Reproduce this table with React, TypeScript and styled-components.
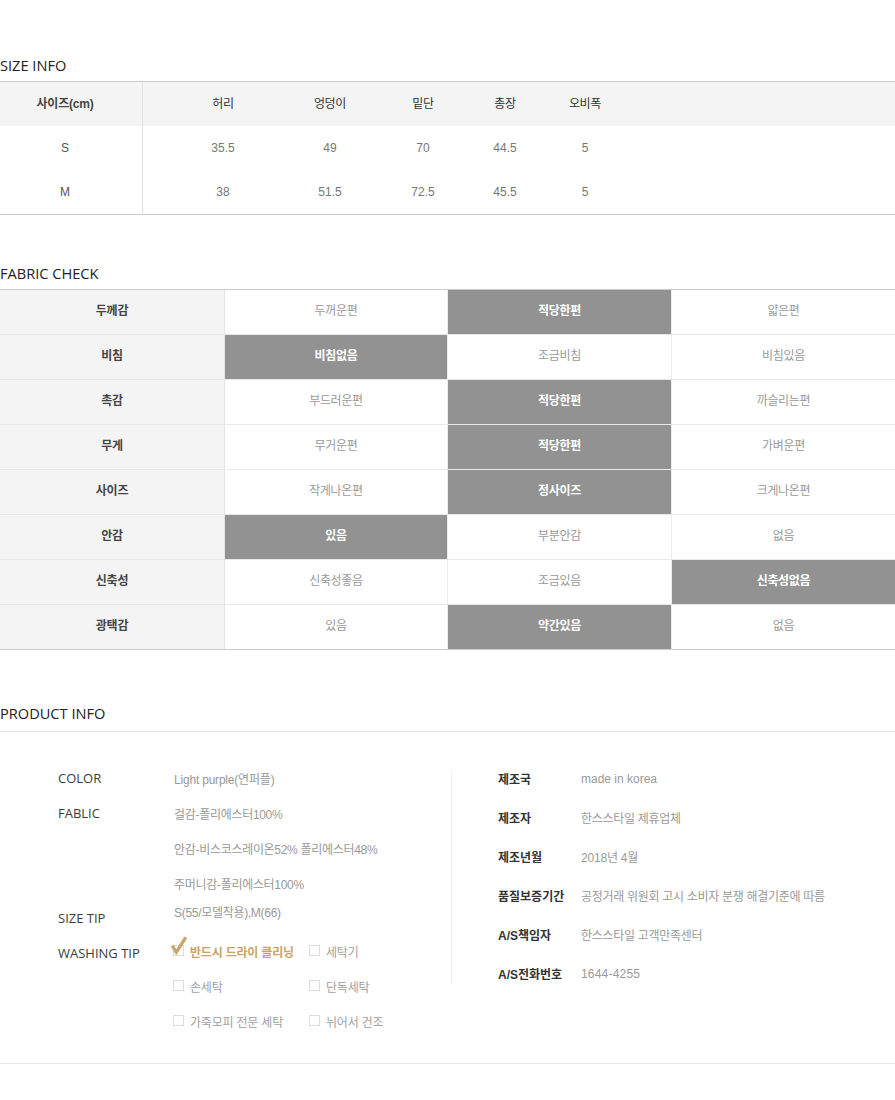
import React from 'react';
import styled, { createGlobalStyle } from 'styled-components';

const KO = `"Liberation Sans", "Noto Sans CJK KR", sans-serif`;
const EN = `"Open Sans", "Noto Sans CJK KR", sans-serif`;

const GlobalStyle = createGlobalStyle`
  html, body { margin: 0; padding: 0; background: #fff; }
  body { font-family: ${KO}; -webkit-font-smoothing: antialiased; }
  * { box-sizing: border-box; }
`;

const Page = styled.div`
  width: 895px;
  padding-top: 56px;
  padding-bottom: 36px;
`;

const SectionTitle = styled.h2<{ $gap?: number }>`
  margin: ${(p) => p.$gap ?? 0}px 0 7px;
  font-family: ${EN};
  font-size: 14.6px;
  font-weight: 400;
  line-height: 18px;
  color: #222;
`;

/* ---------- SIZE INFO ---------- */
const SizeTable = styled.div`
  border-top: 1px solid #cbcbcb;
  border-bottom: 1px solid #cbcbcb;
`;

const SizeRow = styled.div<{ $head?: boolean }>`
  display: grid;
  grid-template-columns: 143px 160px 54px 132px 32px 128px 1fr;
  height: 44px;
  align-items: center;
  background: ${(p) => (p.$head ? '#f4f4f4' : '#fff')};
  padding-bottom: ${(p) => (p.$head ? 4 : 0)}px;
`;

const SizeLabel = styled.div<{ $head?: boolean }>`
  align-self: stretch;
  display: flex;
  align-items: center;
  justify-content: center;
  padding-right: 12px;
  margin-bottom: ${(p) => (p.$head ? -4 : 0)}px;
  padding-bottom: ${(p) => (p.$head ? 4 : 0)}px;
  border-right: 1px solid #e3e3e3;
  font-size: 12px;
  letter-spacing: ${(p) => (p.$head ? '-0.2px' : '0')};
  font-weight: ${(p) => (p.$head ? 700 : 400)};
  color: ${(p) => (p.$head ? '#444' : '#555')};
`;

const SizeCell = styled.div<{ $head?: boolean }>`
  text-align: center;
  white-space: nowrap;
  font-size: 12px;
  letter-spacing: ${(p) => (p.$head ? '-0.3px' : '0')};
  color: ${(p) => (p.$head ? '#333' : '#777')};
`;

/* ---------- FABRIC CHECK ---------- */
const FabricTable = styled.div`
  border-top: 1px solid #cbcbcb;
  border-bottom: 1px solid #cbcbcb;
`;

const FabricRow = styled.div`
  display: grid;
  grid-template-columns: 225px 223px 224px 1fr;
  height: 44px;
  & + & {
    height: 45px;
    border-top: 1px solid #e8e8e8;
  }
`;

const FabricLabel = styled.div`
  display: flex;
  align-items: center;
  justify-content: center;
  padding-bottom: 5px;
  background: #f4f4f4;
  border-right: 1px solid #e4e4e4;
  font-size: 12px;
  font-weight: 700;
  letter-spacing: -0.2px;
  color: #444;
`;

const FabricOption = styled.div<{ $on: boolean }>`
  display: flex;
  align-items: center;
  justify-content: center;
  padding-bottom: 5px;
  font-size: 12px;
  letter-spacing: -0.3px;
  background: ${(p) => (p.$on ? '#929292' : '#fff')};
  color: ${(p) => (p.$on ? '#fff' : '#999')};
  font-weight: ${(p) => (p.$on ? 700 : 400)};
  &:not(:last-child) {
    border-right: 1px solid #ececec;
  }
`;

/* ---------- PRODUCT INFO ---------- */
const ProductBox = styled.div`
  display: flex;
  align-items: flex-start;
  border-top: 1px solid #e5e5e5;
  border-bottom: 1px solid #e5e5e5;
  margin-top: 9px;
  padding: 29px 0 25px;
`;

const LeftInfo = styled.div`
  width: 451px;
  padding-left: 58px;
  display: grid;
  grid-template-columns: 116px 1fr;
`;

const InfoLabel = styled.div<{ $height?: number; $center?: number }>`
  font-family: ${EN};
  font-size: 13px;
  color: #3c3c3c;
  height: ${(p) => p.$height ?? 35}px;
  line-height: ${(p) => (p.$center ?? 17.5) * 2}px;
`;

const ValueStack = styled.div`
  display: flex;
  flex-direction: column;
`;

const InfoValue = styled.div<{ $ls?: number; $height?: number; $line?: number; $shift?: number }>`
  font-size: 12px;
  letter-spacing: ${(p) => p.$ls ?? -0.3}px;
  color: #999;
  white-space: nowrap;
  height: ${(p) => p.$height ?? 35}px;
  line-height: ${(p) => p.$line ?? 35}px;
  padding-top: ${(p) => p.$shift ?? 2}px;
`;

const Options = styled.div`
  display: grid;
  grid-template-columns: 136px 136px;
  grid-auto-rows: 35px;
  margin-left: -1px;
`;

const Option = styled.div<{ $on?: boolean }>`
  display: flex;
  align-items: center;
  gap: 6px;
  font-size: 12px;
  letter-spacing: -0.2px;
  white-space: nowrap;
  color: ${(p) => (p.$on ? '#c8a269' : '#a0a0a0')};
  font-weight: ${(p) => (p.$on ? 700 : 400)};
  padding-top: 1px;
`;

const BoxSvg = styled.svg`
  flex: none;
  overflow: visible;
  margin-top: -1px;
`;

const Divider = styled.div`
  flex: none;
  width: 1px;
  height: 213px;
  margin-top: 10px;
  background: #eeeeee;
`;

const RightInfo = styled.div`
  padding-left: 46px;
  margin-top: -2px;
  display: grid;
  grid-template-columns: 83px 1fr;
  grid-auto-rows: 39px;
  align-items: center;
`;

const RightLabel = styled.div`
  font-size: 12px;
  font-weight: 700;
  letter-spacing: 0;
  color: #333;
  white-space: nowrap;
`;

const RightValue = styled.div<{ $ls?: number }>`
  font-size: 12px;
  letter-spacing: ${(p) => p.$ls ?? -0.3}px;
  color: #999;
  white-space: nowrap;
`;

const CheckBox: React.FC<{ on?: boolean }> = ({ on }) => (
  <BoxSvg width="11" height="11" viewBox="0 0 11 11">
    <rect x="0.5" y="0.5" width="10" height="10" fill="#fff" stroke="#dcdcdc" />
    {on && (
      <path
        d="M-0.8 0.6 L3.3 7.2 L12.8 -7.6"
        fill="none"
        stroke="#c9a46b"
        strokeWidth="3.2"
        strokeLinejoin="miter"
      />
    )}
  </BoxSvg>
);

const sizeHead = ['허리', '엉덩이', '밑단', '총장', '오비폭'];
const sizeRows: { size: string; values: string[] }[] = [
  { size: 'S', values: ['35.5', '49', '70', '44.5', '5'] },
  { size: 'M', values: ['38', '51.5', '72.5', '45.5', '5'] },
];

const fabricRows: { label: string; options: string[]; on: number }[] = [
  { label: '두께감', options: ['두꺼운편', '적당한편', '얇은편'], on: 1 },
  { label: '비침', options: ['비침없음', '조금비침', '비침있음'], on: 0 },
  { label: '촉감', options: ['부드러운편', '적당한편', '까슬리는편'], on: 1 },
  { label: '무게', options: ['무거운편', '적당한편', '가벼운편'], on: 1 },
  { label: '사이즈', options: ['작게나온편', '정사이즈', '크게나온편'], on: 1 },
  { label: '안감', options: ['있음', '부분안감', '없음'], on: 0 },
  { label: '신축성', options: ['신축성좋음', '조금있음', '신축성없음'], on: 2 },
  { label: '광택감', options: ['있음', '약간있음', '없음'], on: 1 },
];

const washing: { text: string; on?: boolean }[] = [
  { text: '반드시 드라이 클리닝', on: true },
  { text: '세탁기' },
  { text: '손세탁' },
  { text: '단독세탁' },
  { text: '가죽모피 전문 세탁' },
  { text: '뉘어서 건조' },
];

const rightInfo: { label: string; value: string; vls?: number }[] = [
  { label: '제조국', value: 'made in korea', vls: 0 },
  { label: '제조자', value: '한스스타일 제휴업체' },
  { label: '제조년월', value: '2018년 4월', vls: -0.2 },
  { label: '품질보증기간', value: '공정거래 위원회 고시 소비자 분쟁 해결기준에 따름' },
  { label: 'A/S책임자', value: '한스스타일 고객만족센터' },
  { label: 'A/S전화번호', value: '1644-4255', vls: 0.2 },
];

export default function App() {
  return (
    <Page>
      <GlobalStyle />

      <SectionTitle>SIZE INFO</SectionTitle>
      <SizeTable>
        <SizeRow $head>
          <SizeLabel $head>사이즈(cm)</SizeLabel>
          {sizeHead.map((h) => (
            <SizeCell $head key={h}>
              {h}
            </SizeCell>
          ))}
        </SizeRow>
        {sizeRows.map((r) => (
          <SizeRow key={r.size}>
            <SizeLabel>{r.size}</SizeLabel>
            {r.values.map((v, i) => (
              <SizeCell key={i}>{v}</SizeCell>
            ))}
          </SizeRow>
        ))}
      </SizeTable>

      <SectionTitle $gap={49}>FABRIC CHECK</SectionTitle>
      <FabricTable>
        {fabricRows.map((r) => (
          <FabricRow key={r.label}>
            <FabricLabel>{r.label}</FabricLabel>
            {r.options.map((o, i) => (
              <FabricOption key={i} $on={i === r.on}>
                {o}
              </FabricOption>
            ))}
          </FabricRow>
        ))}
      </FabricTable>

      <SectionTitle $gap={54}>PRODUCT INFO</SectionTitle>
      <ProductBox>
        <LeftInfo>
          <InfoLabel>COLOR</InfoLabel>
          <ValueStack>
            <InfoValue $ls={-0.2}>Light purple(연퍼플)</InfoValue>
          </ValueStack>

          <InfoLabel>FABLIC</InfoLabel>
          <ValueStack>
            <InfoValue>걸감-폴리에스터100%</InfoValue>
            <InfoValue>안감-비스코스레이온52% 폴리에스터48%</InfoValue>
            <InfoValue>주머니감-폴리에스터100%</InfoValue>
          </ValueStack>

          <InfoLabel $height={32} $center={17}>
            SIZE TIP
          </InfoLabel>
          <ValueStack>
            <InfoValue $ls={-0.3} $height={32} $line={24} $shift={0}>
              S(55/모델착용),M(66)
            </InfoValue>
          </ValueStack>

          <InfoLabel $center={20}>WASHING TIP</InfoLabel>
          <Options>
            {washing.map((w) => (
              <Option key={w.text} $on={w.on}>
                <CheckBox on={w.on} />
                {w.text}
              </Option>
            ))}
          </Options>
        </LeftInfo>

        <Divider />

        <RightInfo>
          {rightInfo.map((r) => (
            <React.Fragment key={r.label}>
              <RightLabel>{r.label}</RightLabel>
              <RightValue $ls={r.vls}>{r.value}</RightValue>
            </React.Fragment>
          ))}
        </RightInfo>
      </ProductBox>
    </Page>
  );
}
